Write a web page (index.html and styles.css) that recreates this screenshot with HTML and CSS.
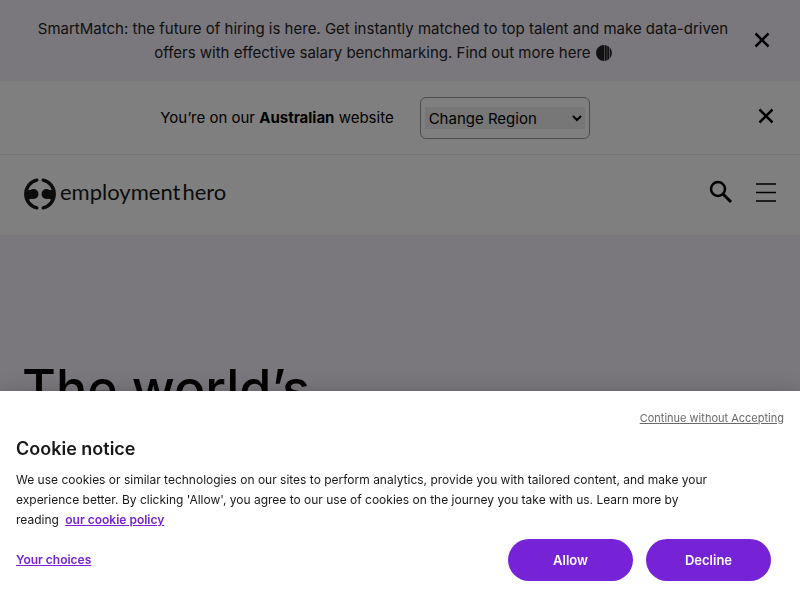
FILE: index.html
```html
<!DOCTYPE html>
<html lang="en-AU">
<head>
<meta charset="utf-8">
<meta name="viewport" content="width=device-width, initial-scale=1">
<title>Employment Hero</title>
<link rel="stylesheet" href="styles.css">
</head>
<body>
<div class="promo">
  <a class="promo-text" href="#smartmatch">SmartMatch: the future of hiring is here. Get instantly matched to top talent and make data-driven<br>offers with effective salary benchmarking. Find out more here
    <svg class="promo-icon" viewBox="0 0 16 16" aria-hidden="true"><path d="M8 0a8 8 0 0 0 0 16zM8.500 0c1 .1 1.600.3 2.300.5v15c-.7.2-1.300.4-2.300.5zM11.200.800l2 1.200v12l-2 1.200zM13.800 2.600a8 8 0 0 1 0 10.800z"/></svg></a>
  <button class="close" type="button" aria-label="Close announcement"><svg viewBox="0 0 16 16"><path d="M1.500 1.500l13 13M14.500 1.500l-13 13"/></svg></button>
</div>
<div class="region">
  <label class="region-text" for="region">You’re on our <strong>Australian</strong> website</label>
  <div class="region-box">
    <select id="region" class="region-select">
      <option>Change Region</option>
    </select>
  </div>
  <button class="close region-close" type="button" aria-label="Close region bar"><svg viewBox="0 0 16 16"><path d="M1.500 1.500l13 13M14.500 1.500l-13 13"/></svg></button>
</div>
<header class="header">
  <a class="logo" href="#home">
    <svg class="logo-mark" viewBox="0 0 32 32" aria-hidden="true">
      <g fill="none" stroke="#181818" stroke-width="3.400" stroke-linecap="round"><path d="M12.800 2.200A14.150 14.150 0 0 0 12.800 29.800"/><path d="M19.200 2.200A14.150 14.150 0 0 1 19.200 29.800"/></g>
      <g fill="#181818"><circle cx="9.600" cy="16" r="4.900"/><circle cx="22.400" cy="16" r="4.900"/><path d="M2 11.500q3 .8 7 .2v9.100q-3.500-.5-4 1.200L2 20zM30 11.500q-3 .8-7 .2v9.100q3.500-.5 4 1.200l3-2z"/></g>
    </svg>
    <span class="logo-name"><span>employment</span><span>hero</span></span>
  </a>
  <div class="tools">
    <button class="tool" type="button" aria-label="Search"><svg width="24" height="24" viewBox="0 0 24 24" fill="none" stroke="#000"><circle cx="9" cy="9" r="7" stroke-width="2.500"/><path d="M14 14l8 8" stroke-width="3"/></svg></button>
    <button class="tool" type="button" aria-label="Menu"><svg width="20" height="24" viewBox="0 0 20 24" stroke="#000" stroke-width="1.600"><path d="M0 4h20M0 12.500h20M0 21h20"/></svg></button>
  </div>
</header>
<main class="hero"><h1>The world’s</h1></main>

<div class="overlay"></div>
<section class="cookie" role="dialog" aria-labelledby="cookie-title">
  <button class="skip" type="button">Continue without Accepting</button>
  <h2 id="cookie-title">Cookie notice</h2>
  <p>We use cookies or similar technologies on our sites to perform analytics, provide you with tailored content, and make your<br>experience better. By clicking 'Allow', you agree to our use of cookies on the journey you take with us. Learn more by<br>reading <a class="policy" href="#policy">our cookie policy</a></p>
  <div class="actions">
    <button class="choices" type="button">Your choices</button>
    <button class="pill" type="button">Allow</button>
    <button class="pill" type="button">Decline</button>
  </div>
</section>
</body>
</html>
```
FILE: styles.css
```css
* { box-sizing: border-box; }
html { overflow: hidden; }
body {
  margin: 0;
  color: #000;
  background: #f6f0fb;
  font: 15px/24px Inter, "Liberation Sans", sans-serif;
}
button {
  padding: 0;
  border: 0;
  background: none;
  color: inherit;
  font: inherit;
}
svg { display: block; }

.promo {
  display: flex;
  align-items: center;
  gap: 14px;
  padding: 17px 30px 16px 26px;
  background: #f6f0fb;
}
.promo-text {
  flex: 1;
  color: #222;
  text-align: center;
  text-decoration: none;
  white-space: nowrap;
}
.promo-icon {
  display: inline-block;
  width: 16px;
  height: 16px;
  margin-left: 1px;
  fill: #222;
  vertical-align: -3px;
}
.promo .close { padding-bottom: 3px; }
.close svg {
  width: 16px;
  height: 16px;
  fill: none;
  stroke: #000;
  stroke-width: 2.5;
}

.region {
  display: flex;
  align-items: center;
  justify-content: center;
  gap: 26px;
  position: relative;
  padding: 16px 50px 15px 0;
  background: #fff;
  border-bottom: 1px solid #eee;
}
.region-box {
  width: 170px;
  padding: 9px 4px;
  border: 1px solid #999;
  border-radius: 6px;
}
.region-select {
  display: block;
  width: 100%;
  height: 22px;
  border: 0;
  background: #efefef;
  color: #000;
  font: inherit;
}
.region-close {
  position: absolute;
  top: 27px;
  right: 26px;
}

.header {
  display: flex;
  align-items: center;
  justify-content: space-between;
  height: 80px;
  padding: 0 24px 2px;
  background: #fff;
}
.logo {
  display: flex;
  align-items: center;
  gap: 4px;
  color: #181818;
  text-decoration: none;
}
.logo-mark { width: 32px; height: 32px; }
.logo-name {
  display: flex;
  gap: 2px;
  padding-bottom: 4px;
  font-family: Lato, Inter, sans-serif;
  font-size: 22px;
}
.tools {
  display: flex;
  gap: 23px;
  padding-bottom: 4px;
}

.hero { padding: 124px 22px; }
.hero h1 {
  margin: 0;
  font-size: 52px;
  line-height: 60px;
  font-weight: 500;
}

.overlay {
  position: fixed;
  inset: 0;
  background: rgb(0 0 0 / 50%);
}
.cookie {
  position: fixed;
  right: 0;
  bottom: 0;
  left: 0;
  padding: 15px 16px 19px;
  background: #fff;
  color: #181818;
  box-shadow: 0 0 18px rgb(0 0 0 / 20%);
}
.skip {
  display: block;
  margin-left: auto;
  color: #696969;
  font-size: 11px;
  text-decoration: underline;
}
.cookie h2 {
  margin: 7px 0 9px;
  font-size: 18px;
  line-height: 24px;
  font-weight: 600;
}
.cookie p {
  margin: 0 0 9px;
  font-size: 12px;
  line-height: 20px;
  white-space: nowrap;
}
.policy, .choices {
  color: #7622d7;
  font-size: 12px;
  font-weight: 600;
  text-decoration: underline;
}
.policy { margin-left: 3px; }
.actions {
  display: flex;
  align-items: center;
  gap: 13px;
  padding-right: 13px;
}
.choices { margin-right: auto; }
.pill {
  width: 125px;
  height: 42px;
  border-radius: 21px;
  background: #7622d7;
  color: #fff;
  font-size: 13px;
  font-weight: 600;
}
```
